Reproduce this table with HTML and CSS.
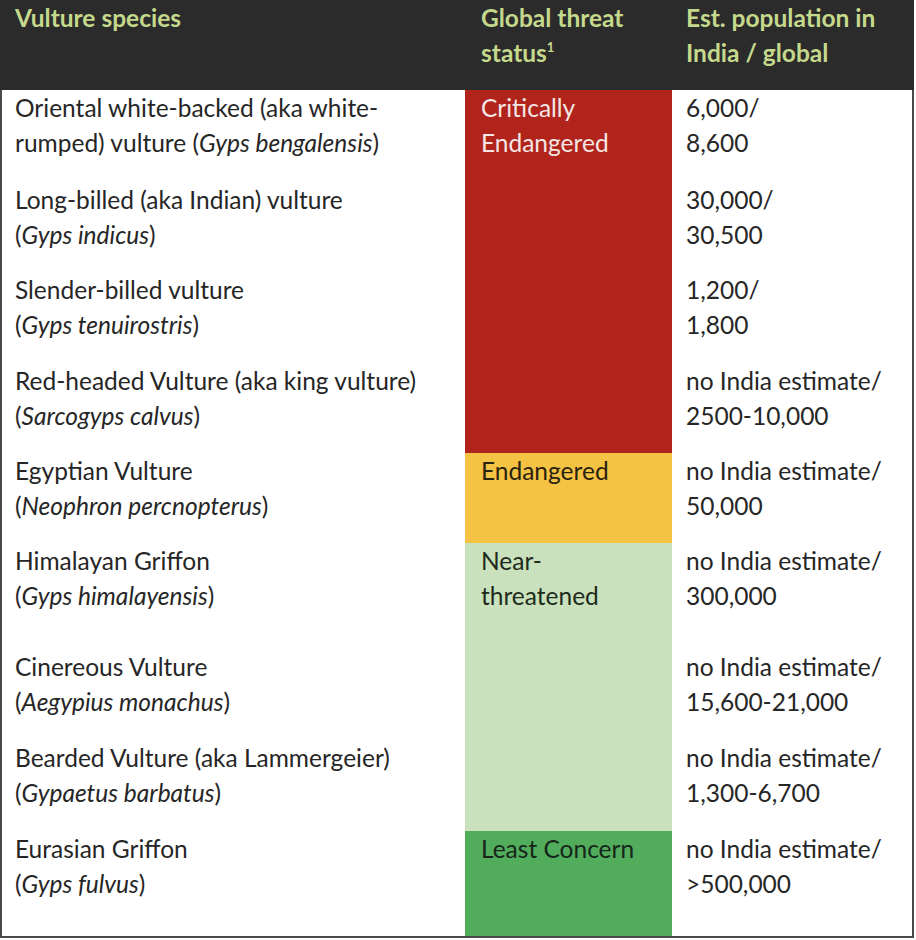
FILE: index.html
```html
<!DOCTYPE html>
<html>
<head>
<meta charset="utf-8">
<link rel="stylesheet" href="styles.css">
</head>
<body>
<div class="table">
  <div class="row head">
    <div class="c1">Vulture species</div>
    <div class="c2">Global threat<br>status<sup>1</sup></div>
    <div class="c3">Est. population in<br>India / global</div>
  </div>
  <div class="row r1">
    <div class="c1">Oriental white-backed (aka white-<br>rumped) vulture (<i>Gyps bengalensis</i>)</div>
    <div class="c2 red">Critically<br>Endangered</div>
    <div class="c3">6,000/<br>8,600</div>
  </div>
  <div class="row r2">
    <div class="c1">Long-billed (aka Indian) vulture<br>(<i>Gyps indicus</i>)</div>
    <div class="c2 red"></div>
    <div class="c3">30,000/<br>30,500</div>
  </div>
  <div class="row r3">
    <div class="c1">Slender-billed vulture<br>(<i>Gyps tenuirostris</i>)</div>
    <div class="c2 red"></div>
    <div class="c3">1,200/<br>1,800</div>
  </div>
  <div class="row r4">
    <div class="c1">Red-headed Vulture (aka king vulture)<br>(<i>Sarcogyps calvus</i>)</div>
    <div class="c2 red"></div>
    <div class="c3">no India estimate/<br>2500-10,000</div>
  </div>
  <div class="row r5">
    <div class="c1">Egyptian Vulture<br>(<i>Neophron percnopterus</i>)</div>
    <div class="c2 yellow">Endangered</div>
    <div class="c3">no India estimate/<br>50,000</div>
  </div>
  <div class="row r6">
    <div class="c1">Himalayan Griffon<br>(<i>Gyps himalayensis</i>)</div>
    <div class="c2 pale">Near-<br>threatened</div>
    <div class="c3">no India estimate/<br>300,000</div>
  </div>
  <div class="row r7">
    <div class="c1">Cinereous Vulture<br>(<i>Aegypius monachus</i>)</div>
    <div class="c2 pale"></div>
    <div class="c3">no India estimate/<br>15,600-21,000</div>
  </div>
  <div class="row r8">
    <div class="c1">Bearded Vulture (aka Lammergeier)<br>(<i>Gypaetus barbatus</i>)</div>
    <div class="c2 pale"></div>
    <div class="c3">no India estimate/<br>1,300-6,700</div>
  </div>
  <div class="row r9">
    <div class="c1">Eurasian Griffon<br>(<i>Gyps fulvus</i>)</div>
    <div class="c2 green">Least Concern</div>
    <div class="c3">no India estimate/<br>&gt;500,000</div>
  </div>
</div>
</body>
</html>
```
FILE: styles.css
```css
html, body {
  margin: 0;
  padding: 0;
  background: #ffffff;
}
body {
  width: 916px;
  height: 940px;
  overflow: hidden;
  font-family: Lato, "Open Sans", sans-serif;
  font-size: 24.5px;
  line-height: 35px;
  color: #262626;
}
.table {
  width: 914px;
  height: 938px;
  box-sizing: border-box;
  border-left: 2px solid #4a4a4a;
  border-right: 2px solid #4a4a4a;
  border-bottom: 2px solid #4a4a4a;
  display: flex;
  flex-direction: column;
}
.row {
  display: grid;
  grid-template-columns: 463px 207px 1fr;
  height: 91px;
}
.row > div {
  box-sizing: border-box;
  white-space: nowrap;
}
.c1 { padding-left: 13px; }
.c2 { padding-left: 16px; }
.c3 { padding-left: 14px; }
.head {
  background: #2b2b2b;
  height: 90px;
  margin-left: -2px;
  margin-right: -2px;
  padding-left: 2px;
  padding-right: 2px;
  color: #c5d98c;
  font-weight: bold;
}
.head sup {
  font-size: 13px;
  line-height: 0;
  vertical-align: 10px;
}
.r1 { height: 92px; }
.r2 { height: 90px; }
.r3 { height: 91px; }
.r4 { height: 90px; }
.r5 { height: 90px; }
.r6 { height: 106px; }
.r7 { height: 91px; }
.r8 { height: 91px; }
.r9 { flex: 1; height: auto; }
.red { background: #b0241c; color: #f4e6e4; }
.yellow { background: #f5c343; color: #2a2210; }
.pale { background: #c9e2bd; color: #1e2a1a; }
.green { background: #51ad5c; color: #16251a; }
i { font-style: italic; }
```
